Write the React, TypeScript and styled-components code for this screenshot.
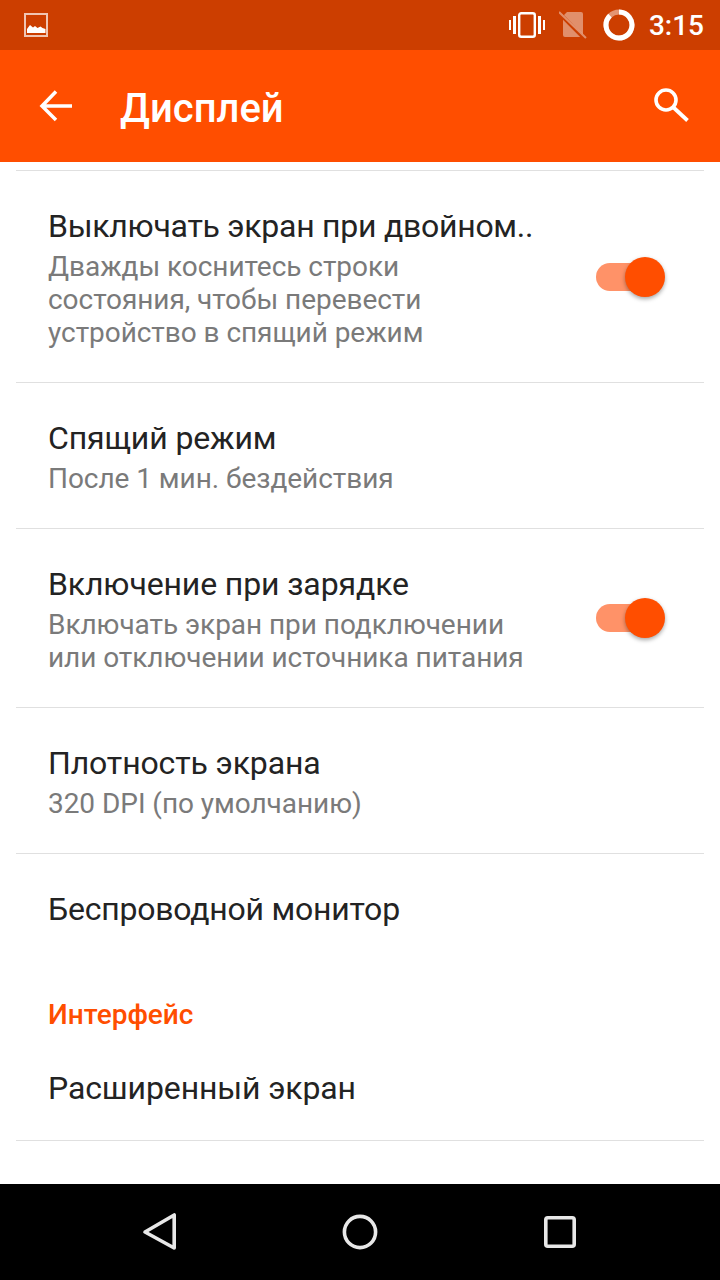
import React from "react";
import styled, { createGlobalStyle } from "styled-components";

const Global = createGlobalStyle`
  html, body { margin: 0; padding: 0; background: #fff; }
  body { font-family: Roboto, "Noto Sans", sans-serif; }
`;

const Screen = styled.div`
  width: 720px;
  height: 1280px;
  display: flex;
  flex-direction: column;
  overflow: hidden;
  background: #fff;
`;

const StatusBar = styled.div`
  height: 50px;
  flex: none;
  background: #cc3e00;
  display: flex;
  align-items: center;
  padding: 0 16px 0 24px;
  color: #fff;
`;

const StatusIcon = styled.svg<{ $gap?: number }>`
  display: block;
  flex: none;
  margin-left: ${(p) => p.$gap ?? 0}px;
`;

const StatusRight = styled.div`
  margin-left: auto;
  display: flex;
  align-items: center;
`;

const Clock = styled.span`
  font-size: 28px;
  font-weight: 500;
  margin-left: 14px;
`;

const Toolbar = styled.header`
  height: 112px;
  flex: none;
  background: #ff4e00;
  display: flex;
  align-items: center;
  padding: 0 31px 0 36px;
  color: #fff;
`;

const BackIcon = styled.svg`
  display: block;
  flex: none;
`;

const ToolbarTitle = styled.h1`
  margin: 5px 0 0 44px;
  font-size: 40px;
  line-height: 48px;
  font-weight: 500;
`;

const ToolbarAction = styled.svg`
  display: block;
  margin: -2px 0 0 auto;
`;

const Content = styled.main`
  flex: 1;
  min-height: 0;
  padding: 8px 16px 0;
  overflow: hidden;
`;

const Row = styled.div<{ $divider?: boolean; $tight?: boolean }>`
  display: flex;
  align-items: center;
  padding: 34px 32px ${(p) => (p.$tight ? 31 : 33)}px;
  border-top: ${(p) => (p.$divider ? "1px solid #e0e0e0" : "0")};
`;

const RowText = styled.div`
  width: 490px;
  flex: none;
`;

const RowTitle = styled.div<{ $tracking?: number }>`
  font-size: 32px;
  line-height: 42px;
  letter-spacing: ${(p) => p.$tracking ?? -0.12}px;
  color: #232323;
  white-space: nowrap;
`;

const RowSub = styled.div`
  margin-top: 3px;
  font-size: 28px;
  line-height: 33px;
  letter-spacing: -0.05px;
  color: #7a7a7a;
`;

const Switch = styled.div`
  position: relative;
  width: 58px;
  height: 28px;
  margin: -1px 18px 0 auto;
  border-radius: 14px;
  background: #ff9268;
`;

const Thumb = styled.span`
  position: absolute;
  right: -11px;
  top: -6px;
  width: 40px;
  height: 40px;
  border-radius: 50%;
  background: #ff4e00;
  box-shadow: 0 2px 4px rgba(0, 0, 0, 0.35);
`;

const Category = styled.div`
  margin-top: 33px;
  padding: 0 32px;
  font-size: 28px;
  line-height: 37px;
  font-weight: 500;
  color: #ff4e00;
`;

const EndDivider = styled.div`
  border-top: 1px solid #e0e0e0;
`;

const NavBar = styled.nav`
  height: 96px;
  flex: none;
  background: #000;
  display: flex;
  align-items: center;
  justify-content: center;
  gap: 144px;
`;

const SwitchOn = () => (
  <Switch>
    <Thumb />
  </Switch>
);

export default function App() {
  return (
    <Screen>
      <Global />
      <StatusBar>
        <StatusIcon width="24" height="24" viewBox="0 0 24 24">
          <rect x="1" y="1" width="22" height="22" fill="none" stroke="#fff" strokeOpacity="0.7" strokeWidth="2" />
          <path d="M3 20v-4l3-4 3 2.500 2-1.500 2.500 2 3-1.500 2 1.500 3 1V20z" fill="#fff" />
        </StatusIcon>
        <StatusRight>
          <StatusIcon width="36" height="26" viewBox="0 0 36 26">
            <rect x="10.200" y="1.200" width="15.600" height="23.600" rx="2" fill="none" stroke="#fff" strokeWidth="2.400" />
            <path d="M4 4h3v18H4zM0 8h2v10H0zM29 4h3v18h-3zM34 8h2v10h-2z" fill="#fff" />
          </StatusIcon>
          <StatusIcon width="28" height="28" viewBox="0 0 28 28" $gap={14}>
            <path d="M8 1h14a2 2 0 0 1 2 2v21a2 2 0 0 1-2 2H6a2 2 0 0 1-2-2V5z" fill="#fff" fillOpacity="0.42" />
            <path d="M0 2l26 26" stroke="#cc3e00" strokeWidth="4" />
            <path d="M0 1l27 26" stroke="#fff" strokeOpacity="0.42" strokeWidth="2" />
          </StatusIcon>
          <StatusIcon width="32" height="32" viewBox="0 0 32 32" $gap={16}>
            <circle cx="16" cy="16" r="13" fill="none" stroke="#fff" strokeOpacity="0.45" strokeWidth="5" />
            <path d="M16 3A13 13 0 1 1 7 6.600" fill="none" stroke="#fff" strokeWidth="5" />
          </StatusIcon>
          <Clock>3:15</Clock>
        </StatusRight>
      </StatusBar>
      <Toolbar>
        <BackIcon width="40" height="40" viewBox="0 0 40 40">
          <path d="M36 20H8M20 5.500L6 20l14 14" fill="none" stroke="#fff" strokeWidth="3.500" />
        </BackIcon>
        <ToolbarTitle>Дисплей</ToolbarTitle>
        <ToolbarAction width="36" height="36" viewBox="0 0 36 36">
          <circle cx="13" cy="13" r="10" fill="none" stroke="#fff" strokeWidth="3.600" />
          <path d="M20.500 20.500l14 13" stroke="#fff" strokeWidth="3.800" fill="none" />
        </ToolbarAction>
      </Toolbar>
      <Content>
        <Row $divider>
          <RowText>
            <RowTitle $tracking={-0.26}>Выключать экран при двойном..</RowTitle>
            <RowSub>Дважды коснитесь строки состояния, чтобы перевести устройство в спящий режим</RowSub>
          </RowText>
          <SwitchOn />
        </Row>
        <Row $divider>
          <RowText>
            <RowTitle>Спящий режим</RowTitle>
            <RowSub>После 1 мин. бездействия</RowSub>
          </RowText>
        </Row>
        <Row $divider>
          <RowText>
            <RowTitle>Включение при зарядке</RowTitle>
            <RowSub>Включать экран при подключении или отключении источника питания</RowSub>
          </RowText>
          <SwitchOn />
        </Row>
        <Row $divider>
          <RowText>
            <RowTitle>Плотность экрана</RowTitle>
            <RowSub>320 DPI (по умолчанию)</RowSub>
          </RowText>
        </Row>
        <Row $divider>
          <RowText>
            <RowTitle $tracking={-0.22}>Беспроводной монитор</RowTitle>
          </RowText>
        </Row>
        <Category>Интерфейс</Category>
        <Row $tight>
          <RowText>
            <RowTitle>Расширенный экран</RowTitle>
          </RowText>
        </Row>
        <EndDivider />
      </Content>
      <NavBar>
        <svg width="56" height="48" viewBox="0 0 56 48">
          <path d="M13 24L42.200 7v33z" fill="none" stroke="#e8e8e8" strokeWidth="3.600" strokeLinejoin="round" />
        </svg>
        <svg width="56" height="48" viewBox="0 0 56 48">
          <circle cx="28" cy="24" r="15.600" fill="none" stroke="#e8e8e8" strokeWidth="3.600" />
        </svg>
        <svg width="56" height="48" viewBox="0 0 56 48">
          <rect x="13.800" y="9.800" width="28.400" height="28.400" rx="2" fill="none" stroke="#e8e8e8" strokeWidth="3.600" />
        </svg>
      </NavBar>
    </Screen>
  );
}
